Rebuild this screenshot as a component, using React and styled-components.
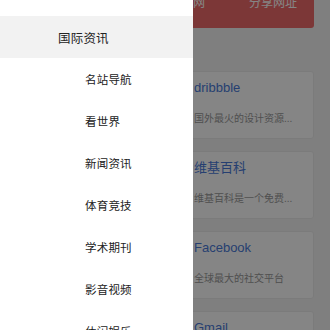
import React from 'react';
import styled, { createGlobalStyle } from 'styled-components';

const GlobalStyle = createGlobalStyle`
  html, body {
    margin: 0;
    padding: 0;
    overflow: hidden;
  }

  body {
    font-family: "Liberation Sans", "Noto Sans CJK SC", sans-serif;
  }
`;

const Screen = styled.div`
  position: relative;
  width: 330px;
  height: 330px;
  overflow: hidden;
  background: #f4f4f4;
`;

const Main = styled.div`
  display: flex;
  flex-flow: column;
  padding: 0 16px;
`;

const ActionBar = styled.div`
  display: flex;
  justify-content: flex-end;
  align-items: flex-start;
  gap: 44px;
  height: 28px;
  padding: 0 17px;
  background: #ee6a6a;
  border-radius: 0 0 3px 3px;
  box-sizing: border-box;
`;

const Action = styled.div`
  margin-top: -4px;
  font-size: 12px;
  line-height: 14px;
  color: #fff;
`;

const CardList = styled.div`
  display: flex;
  flex-flow: column;
  gap: 12px;
  margin-top: 43px;
`;

const Card = styled.div`
  display: flex;
  height: 68px;
  background: #fff;
  border: 1px solid #ececec;
  border-radius: 3px;
  box-sizing: border-box;
  padding: 7px 12px 0 177px;
`;

const CardBody = styled.div`
  display: flex;
  flex-flow: column;
`;

const CardTitle = styled.div`
  font-size: 13px;
  line-height: 18px;
  color: #4a7ad8;
`;

const CardDesc = styled.div`
  margin-top: 15px;
  font-size: 10px;
  line-height: 14px;
  color: #999;
  white-space: nowrap;
`;

const Overlay = styled.div`
  position: absolute;
  inset: 0;
  background: rgba(0, 0, 0, 0.48);
`;

const Drawer = styled.nav`
  position: absolute;
  top: 0;
  left: 0;
  bottom: 0;
  width: 193px;
  background: #fff;
  display: flex;
  flex-flow: column;
  padding-top: 16px;
  box-sizing: border-box;
`;

const DrawerItem = styled.div`
  flex: 0 0 42px;
  display: flex;
  align-items: center;
  padding-left: ${props => (props.$active ? '58px' : '85px')};
  background: ${props => (props.$active ? '#f2f2f2' : '#fff')};
  font-size: ${props => (props.$active ? '12.5px' : '11.5px')};
  color: #222;
  letter-spacing: 0.2px;
`;

const sites = [
  { title: 'dribbble', desc: '国外最火的设计资源...' },
  { title: '维基百科', desc: '维基百科是一个免费...' },
  { title: 'Facebook', desc: '全球最大的社交平台' },
  { title: 'Gmail', desc: '谷歌免费邮箱服务' },
];

const menu = ['国际资讯', '名站导航', '看世界', '新闻资讯', '体育竞技', '学术期刊', '影音视频', '休闲娱乐'];

const App = () => (
  <Screen>
    <GlobalStyle />
    <Main>
      <ActionBar>
        <Action>收藏本网</Action>
        <Action>分享网址</Action>
      </ActionBar>
      <CardList>
        {sites.map(site => (
          <Card key={site.title}>
            <CardBody>
              <CardTitle>{site.title}</CardTitle>
              <CardDesc>{site.desc}</CardDesc>
            </CardBody>
          </Card>
        ))}
      </CardList>
    </Main>
    <Overlay />
    <Drawer>
      {menu.map((item, i) => (
        <DrawerItem key={item} $active={i === 0}>
          {item}
        </DrawerItem>
      ))}
    </Drawer>
  </Screen>
);

export default App;
